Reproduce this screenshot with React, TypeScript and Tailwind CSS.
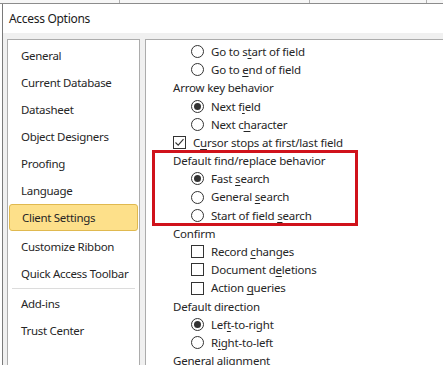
import React from 'react';

const font = { fontFamily: '"Segoe UI", "Noto Sans", sans-serif' };

function U({ children }: { children: React.ReactNode }) {
  return <span className="underline decoration-1 underline-offset-[2px]">{children}</span>;
}

function Radio({ checked, children }: { checked?: boolean; children: React.ReactNode }) {
  return (
    <div className="flex h-[18.2px] items-center pl-[45px]">
      <span className="flex h-[13px] w-[13px] shrink-0 items-center justify-center rounded-full border border-[#333]">
        {checked && <span className="h-[7px] w-[7px] rounded-full bg-[#333]" />}
      </span>
      <span className="ml-[7px]">{children}</span>
    </div>
  );
}

function Check({ checked, indent, children }: { checked?: boolean; indent: string; children: React.ReactNode }) {
  return (
    <div className={`flex h-[18.2px] items-center ${indent}`}>
      <span className="flex h-[13px] w-[13px] shrink-0 items-center justify-center border border-[#333] bg-white">
        {checked && (
          <svg width="11" height="11" viewBox="0 0 11 11">
            <path d="M1.5 5.5 L4.2 8.2 L9.5 2.2" fill="none" stroke="#333" strokeWidth="1.1" />
          </svg>
        )}
      </span>
      <span className="ml-[7px]">{children}</span>
    </div>
  );
}

function Label({ children }: { children: React.ReactNode }) {
  return <div className="flex h-[18.2px] items-center pl-[27px]">{children}</div>;
}

const nav = [
  'General',
  'Current Database',
  'Datasheet',
  'Object Designers',
  'Proofing',
  'Language',
  'Client Settings',
  'Customize Ribbon',
  'Quick Access Toolbar',
];

export default function App() {
  return (
    <div className="relative h-[365px] w-[443px] overflow-hidden bg-white text-[#262626]" style={font}>
      {/* window behind the dialog */}
      <div className="h-[4px] shrink-0 overflow-hidden border-b border-[#8c8c8c] bg-[#f6f6f6] text-[12px] leading-[14px] text-[#444]">
        <div className="-mt-[11px] flex whitespace-nowrap">
          <span className="w-[120px] border-r border-[#b0b0b0] pl-[10px]">Filter</span>
          <span className="w-[190px] border-r border-[#b0b0b0] text-center">Records</span>
          <span className="w-[117px] border-r border-[#b0b0b0] text-center">Find</span>
        </div>
      </div>

      <div className="ml-[2px] flex h-[361px] flex-col border-l border-[#7a7a7a]">
        <div className="flex h-[29px] shrink-0 items-center pl-[6px] pt-[1px] text-[12px] tracking-[-0.3px] text-[#1a1a1a]">
          Access Options
        </div>

        <div className="flex min-h-0 flex-1 overflow-hidden bg-[#f0f0f0] pt-[6px]">
          <div className="ml-[4px] w-[133px] shrink-0 border border-b-0 border-[#acacac] bg-white pt-[2px] text-[11.5px] tracking-[-0.3px] whitespace-nowrap">
            {nav.map((item) =>
              item === 'Client Settings' ? (
                <div
                  key={item}
                  className="mx-[1px] mb-[2px] flex h-[27px] items-center rounded-[3px] border border-[#e0b94f] bg-[#fde08a] pl-[12px]"
                >
                  {item}
                </div>
              ) : (
                <div key={item} className="flex h-[27px] items-center pl-[13px]">
                  {item}
                </div>
              )
            )}
            <div className="mx-[4px] my-[1px] border-t border-[#dcdcdc]" />
            <div className="flex h-[27px] items-center pl-[13px]">Add-ins</div>
            <div className="flex h-[27px] items-center pl-[13px]">Trust Center</div>
          </div>

          <div className="ml-[5px] min-w-0 flex-1 border border-r-0 border-b-0 border-[#acacac] bg-white pt-[2.5px] text-[11.5px] tracking-[-0.2px] whitespace-nowrap">
            <Radio>Go to s<U>t</U>art of field</Radio>
            <Radio>Go to <U>e</U>nd of field</Radio>
            <Label>Arrow key behavior</Label>
            <Radio checked>Next f<U>i</U>eld</Radio>
            <Radio>Next c<U>h</U>aracter</Radio>
            <Check checked indent="pl-[27px]">
              C<U>u</U>rsor stops at first/last field
            </Check>
            <div className="relative">
              <div className="pointer-events-none absolute left-[6px] -top-[2px] h-[76px] w-[206px] border-[3px] border-[#d0121b]" />
              <Label>Default find/replace behavior</Label>
              <Radio checked>Fast <U>s</U>earch</Radio>
              <Radio>General <U>s</U>earch</Radio>
              <Radio>Start of field <U>s</U>earch</Radio>
            </div>
            <Label>Confirm</Label>
            <Check indent="pl-[45px]">Record <U>c</U>hanges</Check>
            <Check indent="pl-[45px]">Document d<U>e</U>letions</Check>
            <Check indent="pl-[45px]">Action <U>q</U>ueries</Check>
            <Label>Default direction</Label>
            <Radio checked>Lef<U>t</U>-to-right</Radio>
            <Radio>R<U>i</U>ght-to-left</Radio>
            <Label>General alignment</Label>
          </div>
        </div>
      </div>
    </div>
  );
}
